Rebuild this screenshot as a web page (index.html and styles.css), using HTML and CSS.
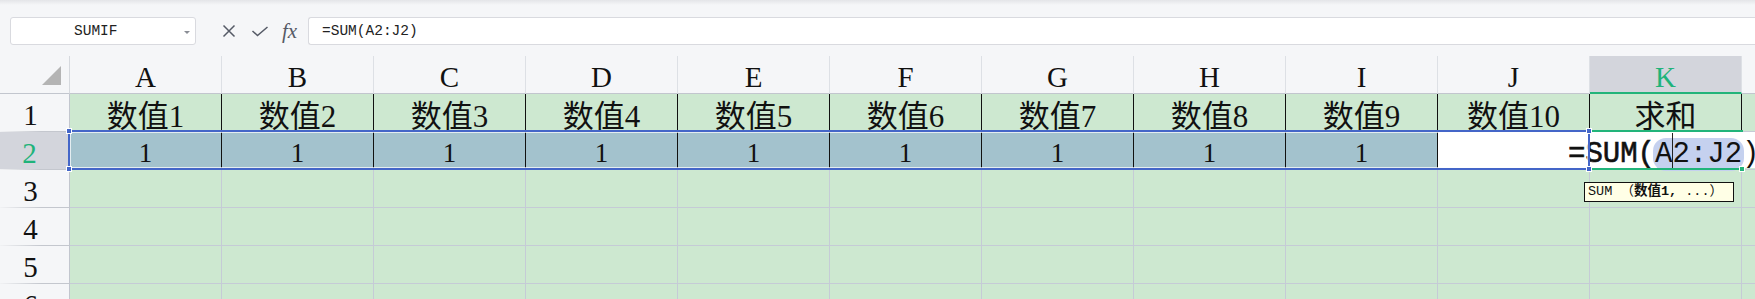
FILE: index.html
```html
<!DOCTYPE html>
<html lang="zh">
<head>
  <meta charset="UTF-8">
  <title>SUMIF</title>
  <link rel="stylesheet" href="styles.css">
</head>
<body>

<!-- Formula bar -->
<div class="toolbar">
  <div class="name-box">
    <span class="name">SUMIF</span>
    <span class="caret"></span>
  </div>
  <div class="fx-btns">
    <svg class="icon" width="16" height="16" viewBox="0 0 16 16"><path d="M2.5 2.5 L13.5 13.5 M13.5 2.5 L2.5 13.5" stroke="#555a66" stroke-width="1.5" fill="none"/></svg>
    <svg class="icon" width="18" height="16" viewBox="0 0 18 16"><path d="M1.5 8 L6.5 12.5 L16.5 4" stroke="#555a66" stroke-width="1.5" fill="none"/></svg>
    <span class="fx">fx</span>
  </div>
  <div class="formula">=SUM(A2:J2)</div>
</div>

<!-- Sheet -->
<div class="sheet">
  <div class="grid">
    <div class="corner"><span class="corner-tri"></span></div>
    <div class="col-head">A</div>
    <div class="col-head">B</div>
    <div class="col-head">C</div>
    <div class="col-head">D</div>
    <div class="col-head">E</div>
    <div class="col-head">F</div>
    <div class="col-head">G</div>
    <div class="col-head">H</div>
    <div class="col-head">I</div>
    <div class="col-head">J</div>
    <div class="col-head active">K</div>
    <div class="col-head rest"></div>

    <div class="row-head">1</div>
    <div class="cell title">数值1</div>
    <div class="cell title">数值2</div>
    <div class="cell title">数值3</div>
    <div class="cell title">数值4</div>
    <div class="cell title">数值5</div>
    <div class="cell title">数值6</div>
    <div class="cell title">数值7</div>
    <div class="cell title">数值8</div>
    <div class="cell title">数值9</div>
    <div class="cell title">数值10</div>
    <div class="cell title">求和</div>
    <div class="cell rest"></div>

    <div class="row-head active">2</div>
    <div class="cell value sel">1</div>
    <div class="cell value sel">1</div>
    <div class="cell value sel">1</div>
    <div class="cell value sel">1</div>
    <div class="cell value sel">1</div>
    <div class="cell value sel">1</div>
    <div class="cell value sel">1</div>
    <div class="cell value sel">1</div>
    <div class="cell value sel">1</div>
    <div class="cell value"></div>
    <div class="cell value"></div>
    <div class="cell rest"></div>

    <div class="row-head">3</div>
    <div class="cell"></div><div class="cell"></div><div class="cell"></div><div class="cell"></div>
    <div class="cell"></div><div class="cell"></div><div class="cell"></div><div class="cell"></div>
    <div class="cell"></div><div class="cell"></div><div class="cell"></div><div class="cell rest"></div>

    <div class="row-head">4</div>
    <div class="cell"></div><div class="cell"></div><div class="cell"></div><div class="cell"></div>
    <div class="cell"></div><div class="cell"></div><div class="cell"></div><div class="cell"></div>
    <div class="cell"></div><div class="cell"></div><div class="cell"></div><div class="cell rest"></div>

    <div class="row-head">5</div>
    <div class="cell"></div><div class="cell"></div><div class="cell"></div><div class="cell"></div>
    <div class="cell"></div><div class="cell"></div><div class="cell"></div><div class="cell"></div>
    <div class="cell"></div><div class="cell"></div><div class="cell"></div><div class="cell rest"></div>

    <div class="row-head">6</div>
    <div class="cell"></div><div class="cell"></div><div class="cell"></div><div class="cell"></div>
    <div class="cell"></div><div class="cell"></div><div class="cell"></div><div class="cell"></div>
    <div class="cell"></div><div class="cell"></div><div class="cell"></div><div class="cell rest"></div>
  </div>

  <!-- overlays: in-cell editor, selection, handles, tooltip -->
  <div class="editor"><span class="edit-text"><b>=SUM(</b><span class="ref">A<i class="cursor"></i>2:J2</span>)</span></div>
  <div class="selection"></div>
  <div class="active-top"></div>
  <div class="active-bottom"></div>
  <span class="handle h1"></span>
  <span class="handle h2"></span>
  <span class="handle h3"></span>
  <span class="handle h4"></span>
  <span class="handle fill"></span>
  <div class="tip">SUM （<b>数值1,</b> ...）</div>
</div>

</body>
</html>
```

FILE: styles.css
```css
* {
  margin: 0;
  padding: 0;
  box-sizing: border-box;
}

body {
  background: #f5f6f8;
  font-family: "Liberation Serif", "Noto Sans CJK SC", serif;
  overflow: hidden;
  width: 1755px;
  height: 299px;
}

.toolbar {
  height: 56px;
  display: flex;
  align-items: flex-start;
  padding: 17px 0 0 10px;
  background: linear-gradient(#e4e5e8 0, #f5f6f8 5px);
}

.name-box {
  width: 186px;
  height: 28px;
  background: white;
  border: 1px solid #d9dadf;
  border-radius: 3px;
  display: flex;
  align-items: center;
  padding-left: 63px;
  position: relative;
}

.name {
  font-family: "Liberation Mono", monospace;
  font-size: 14.5px;
  color: #222;
}

.caret {
  position: absolute;
  right: 5px;
  top: 13px;
  border-left: 3px solid transparent;
  border-right: 3px solid transparent;
  border-top: 3px solid #8a8d95;
}

.fx-btns {
  width: 112px;
  height: 28px;
  display: flex;
  align-items: center;
  padding-left: 25px;
  gap: 14px;
}

.fx {
  font-family: "Liberation Serif", serif;
  font-style: italic;
  font-size: 21px;
  color: #555a66;
  margin-left: -1px;
}

.formula {
  flex: 1;
  height: 28px;
  background: white;
  border: 1px solid #d9dadf;
  border-right: none;
  border-radius: 3px 0 0 3px;
  display: flex;
  align-items: center;
  padding-left: 13px;
  font-family: "Liberation Mono", monospace;
  font-size: 14.5px;
  color: #222;
}

.sheet {
  position: relative;
  height: 243px;
  overflow: hidden;
}

.grid {
  display: grid;
  grid-template-columns: 70px repeat(11, 152px) 1fr;
  grid-auto-rows: 38px;
}

.corner {
  border-right: 1px solid #d6d9de;
  border-bottom: 1px solid #c2c6ce;
  position: relative;
}

.corner-tri {
  position: absolute;
  left: 42px;
  top: 10px;
  border-left: 19px solid transparent;
  border-bottom: 19px solid #b4b4b4;
}

.col-head {
  border-right: 1px solid #dde0e5;
  border-bottom: 1px solid #c2c6ce;
  display: flex;
  justify-content: center;
  align-items: center;
  padding-top: 5px;
  font-size: 29px;
  color: #111;
}

.col-head.active {
  background: #d3d5dc;
  color: #1fb37a;
  border-bottom: 2px solid #22b47a;
  padding-top: 6px;
}

.col-head.rest {
  border-right: none;
}

.row-head {
  border-right: 1px solid #c2c6ce;
  background: linear-gradient(to right, #f1f2f4, #c4c7ce 60%) bottom / 100% 1px no-repeat #f5f6f8;
  display: flex;
  justify-content: center;
  align-items: center;
  padding: 4px 8px 0 0;
  font-size: 29px;
  color: #111;
}

.row-head.active {
  background-color: #d3d5dc;
  color: #1fb37a;
  border-right: 2px solid #22b47a;
  padding-right: 9px;
}

.cell {
  background: #cde8d0;
  border-right: 1px solid #c5cbd6;
  border-bottom: 1px solid #c5cbd6;
  display: flex;
  justify-content: center;
  align-items: center;
  color: #111;
}

.cell.title {
  border-right-color: #111;
  font-size: 31px;
  padding-top: 2px;
}

.cell.value {
  border-right-color: #111;
  font-size: 27px;
  padding-top: 5px;
}

.cell.sel {
  background: #a3c2cd;
}

.cell.rest {
  border-right: none;
}

.editor {
  position: absolute;
  left: 1438px;
  top: 76px;
  right: 0;
  height: 36px;
  background: white;
  padding-left: 130px;
  white-space: nowrap;
  display: flex;
  align-items: center;
}

.edit-text {
  font-family: "Liberation Mono", monospace;
  font-size: 29px;
  color: #111;
  padding-top: 4px;
}

.edit-text b {
  font-weight: normal;
  -webkit-text-stroke: 0.6px #111;
}

.ref {
  background: #c5d1ef;
  border-radius: 13px;
  padding: 0 2px;
  margin: 0 -2px;
}

.cursor {
  display: inline-block;
  width: 1px;
  height: 37px;
  background: #222;
  vertical-align: -8px;
  margin-right: -1px;
}

.selection {
  position: absolute;
  left: 68px;
  top: 74px;
  width: 1522px;
  height: 40px;
  border: 2px solid #4466c8;
  box-shadow: inset 0 0 0 1px rgba(255, 255, 255, 0.7);
}

.active-top,
.active-bottom {
  position: absolute;
  left: 1590px;
  width: 153px;
  height: 2px;
  background: #22b47a;
}

.active-top {
  top: 74px;
}

.active-bottom {
  top: 112px;
}

.handle {
  position: absolute;
  width: 6px;
  height: 6px;
  background: #4466c8;
  border: 1px solid white;
}

.h1 { left: 66px; top: 72px; }
.h2 { left: 66px; top: 110px; }
.h3 { left: 1586px; top: 72px; }
.h4 { left: 1586px; top: 110px; }

.handle.fill {
  left: 1739px;
  top: 110px;
  background: #22b47a;
}

.tip {
  position: absolute;
  left: 1584px;
  top: 126px;
  width: 150px;
  height: 20px;
  background: #ffffe6;
  border: 1px solid #111;
  font-family: "Liberation Mono", "Noto Sans CJK SC", monospace;
  font-size: 13.5px;
  line-height: 18px;
  padding-left: 3px;
  color: #111;
  white-space: nowrap;
}
```
